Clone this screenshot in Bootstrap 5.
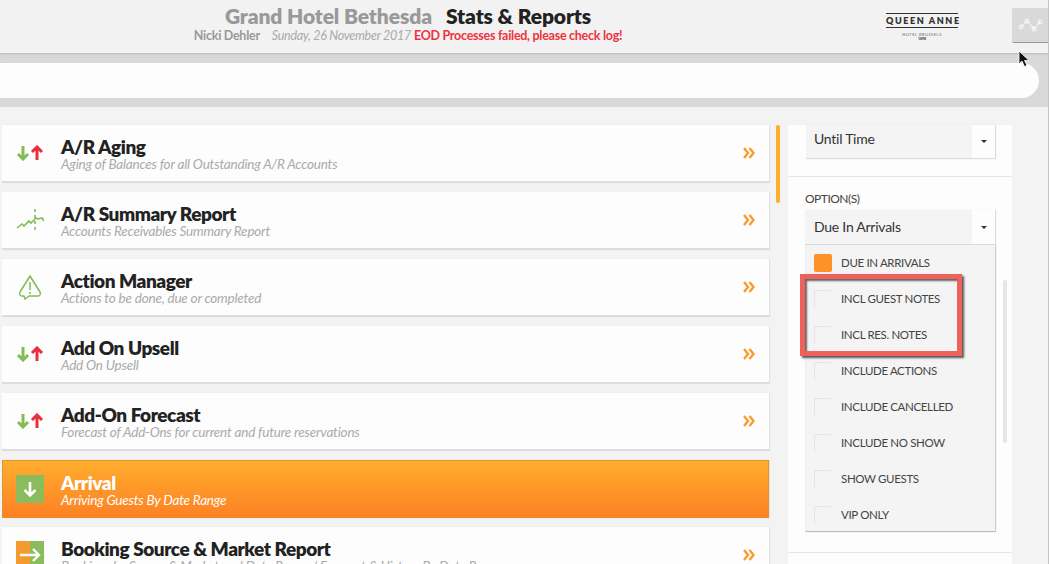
<!DOCTYPE html>
<html lang="en">

<head>
    <meta charset="UTF-8">
    <meta name="viewport" content="width=device-width, initial-scale=1.0">
    <title>Stats &amp; Reports</title>
    <link href="https://cdn.jsdelivr.net/npm/bootstrap@5.3.0/dist/css/bootstrap.min.css" rel="stylesheet">
    <style>
        html, body { height: 564px; overflow: hidden; }
        body { position: relative; font-family: "Lato", "Open Sans", sans-serif; background: #f3f3f3; color: #222; }

        .top-head { height: 53px; background: #f2f2f2; }
        .head-title { width: 816px; padding-top: 4px; }
        .head-main { line-height: 23px; }
        .hotel-name { font-size: 21px; font-weight: 800; color: #999; margin-right: 10px; letter-spacing: -.1px; }
        .page-name { font-size: 21px; font-weight: 800; color: #222; letter-spacing: -.1px; }
        .head-sub { font-size: 12.5px; line-height: 14px; letter-spacing: -.27px; white-space: nowrap; }
        .head-user { font-weight: 700; color: #999; margin-right: 9px; }
        .head-date { font-style: italic; color: #aaa; }
        .head-alert { font-weight: 700; color: #ee3340; }

        .logo-box { width: 196px; padding: 13px 0 0 16px; text-align: center; color: #333; }
        .logo-main { width: 72px; margin: 0 auto; border-top: 1px solid #333; border-bottom: 1px solid #333; font-size: 9px; font-weight: 800; letter-spacing: 1.6px; line-height: 13px; white-space: nowrap; }
        .logo-sub { font-size: 4px; line-height: 5px; letter-spacing: .5px; margin-top: 4px; color: #666; }
        .logo-year { font-size: 3.5px; line-height: 5px; font-weight: 700; }
        .graph-btn { width: 37px; height: 35px; margin-top: 8px; background: #d9d9d9; border-bottom: 1px solid #999; border-radius: 2px 0 0 2px; }

        .search-strip { height: 54px; padding: 10px 10px 9px 0; background: #d9d9d9; box-shadow: inset 0 2px 2px -1px #bbb; }
        .search-fill { height: 35px; background: #fdfdfd; border-radius: 0 18px 18px 0; }

        .main-area { padding-top: 18px; }
        .report-col { width: 767px; margin-left: 2px; }
        .report-item { height: 58px; margin-bottom: 9px; background: #fdfdfd; border: 0; border-radius: 0; border-bottom: 2px solid #ddd; box-shadow: 1px 0 1px #e2e2e2; }
        .report-icon { width: 55px; margin-right: 4px; flex: none; }
        .report-text { padding-top: 2px; }
        .report-name { font-size: 19px; font-weight: 800; line-height: 20px; letter-spacing: -.45px; color: #222; white-space: nowrap; }
        .report-desc { font-size: 13.5px; font-style: italic; line-height: 14px; letter-spacing: -.2px; color: #aaa; white-space: nowrap; }
        .report-chev { margin-right: 14px; }
        .report-item.is-active { background: linear-gradient(#ffae2e, #fd8024); border: 1px solid #e0952a; }
        .is-active .report-name, .is-active .report-desc { color: #fff; }
        .is-active .report-icon { margin-left: -1px; }

        .scroll-thumb { width: 4px; height: 78px; margin: 0 8px 0 7px; background: #ffae2e; border-radius: 2px; }

        .side-panel { width: 224px; height: 460px; background: #fdfdfd; flex: none; }
        .side-top { height: 52px; padding: 0 17px 0 18px; border-bottom: 1px solid #e6e6e6; }
        .pick-box { height: 34px; background: #f4f4f4; border-bottom: 1px solid #ddd; box-shadow: 1px 0 1px #ddd; font-size: 14px; letter-spacing: -.25px; color: #333; }
        .pick-box.is-open { height: 35px; }
        .pick-label { padding-left: 8px; line-height: 28px; }
        .is-open .pick-label { line-height: 34px; padding-left: 9px; }
        .pick-caret { width: 23px; height: 33px; background: #fdfdfd; }
        .is-open .pick-caret { height: 34px; }
        .pick-caret::after { content: ""; border-top: 3px solid #333; border-left: 3px solid transparent; border-right: 3px solid transparent; }
        .side-label { font-size: 12px; line-height: 16px; letter-spacing: -.5px; color: #444; margin: 14px 0 3px; }
        .side-opts { padding: 0 17px 0 17px; }
        .opt-list { height: 287px; background: #f4f4f4; border-bottom: 1px solid #bbb; box-shadow: 1px 0 1px #ccc; border-left: 1px solid #eee; }
        .opt-row { height: 36px; padding-left: 8px; }
        .opt-row .form-check-input { width: 18px; height: 18px; margin: 0; background-color: #f4f4f4; border: 0; border-top: 1px solid #e4e4e4; border-left: 1px solid #e4e4e4; border-radius: 2px; flex: none; }
        .opt-row .form-check-input:checked { background-color: #fd9326; background-image: none; border: 0; }
        .opt-text { margin-left: 9px; font-size: 11.5px; letter-spacing: -.35px; color: #444; white-space: nowrap; }
        .opt-scroll { position: absolute; top: 280px; left: 1003px; width: 4px; height: 163px; background: #e6e6e6; border-radius: 2px; }
        .side-rest { margin-top: 20px; border-top: 1px solid #e6e6e6; }

        .note-frame { position: absolute; left: 800px; top: 274px; width: 162px; height: 82px; border: 5px solid #ee6259; box-shadow: 2px 2px 2px #555, inset 2px 2px 2px #666; }
        .pointer { position: absolute; left: 1018px; top: 50px; }
        .page-edge { position: absolute; top: 0; right: 0; width: 1px; height: 564px; background: #c4c4c4; }
    </style>
</head>

<body>
    <!-- Cabecera -->
    <header class="top-head d-flex">
        <div class="head-title text-center">
            <div class="head-main"><span class="hotel-name">Grand Hotel Bethesda</span> <span class="page-name">Stats &amp; Reports</span></div>
            <div class="head-sub"><span class="head-user">Nicki Dehler</span> <span class="head-date">Sunday, 26 November 2017</span> <span class="head-alert">EOD Processes failed, please check log!</span></div>
        </div>
        <div class="logo-box">
            <div class="logo-main">QUEEN ANNE</div>
            <div class="logo-sub">HOTEL BRUSSELS</div>
            <div class="logo-year">1898</div>
        </div>
        <div class="graph-btn d-flex align-items-center justify-content-center">
            <svg width="25" height="14" viewBox="0 0 25 14" fill="none" stroke="#fff" stroke-width="1"><path d="M3 9 9 3l7 8 6-7"/><circle cx="3" cy="9" r="2"/><circle cx="9" cy="3" r="2"/><circle cx="16" cy="11" r="2"/><circle cx="22" cy="4" r="2"/></svg>
        </div>
    </header>

    <div class="search-strip">
        <div class="search-fill"></div>
    </div>

    <div class="main-area d-flex">
        <!-- Lista de reportes -->
        <div class="report-col">
            <div class="card report-item flex-row align-items-center">
                <div class="report-icon d-flex justify-content-center">
                    <svg width="28" height="16" viewBox="0 0 28 16" fill="none" stroke-width="3"><path d="M7 1v13M2 9l5 5 5-5" stroke="#85bb55"/><path d="M21 15V2M16 7l5-5 5 5" stroke="#ea2e3c"/></svg>
                </div>
                <div class="report-text flex-grow-1"><div class="report-name">A/R Aging</div><div class="report-desc">Aging of Balances for all Outstanding A/R Accounts</div></div>
                <svg class="report-chev" width="12" height="12" viewBox="0 0 12 12" fill="none" stroke="#fd9a2e" stroke-width="2.4"><path d="M1 1l4 5-4 5M6.500 1l4 5-4 5"/></svg>
            </div>
            <div class="card report-item flex-row align-items-center">
                <div class="report-icon d-flex justify-content-center">
                    <svg width="28" height="24" viewBox="0 0 28 24" fill="none" stroke="#85bb55" stroke-width="1.6"><path d="M1 20l5-4 2 2 5-5 2 2 5-5 2 1 4-1 2 3"/><path d="M19 1v21" stroke-dasharray="3 3"/></svg>
                </div>
                <div class="report-text flex-grow-1"><div class="report-name">A/R Summary Report</div><div class="report-desc">Accounts Receivables Summary Report</div></div>
                <svg class="report-chev" width="12" height="12" viewBox="0 0 12 12" fill="none" stroke="#fd9a2e" stroke-width="2.4"><path d="M1 1l4 5-4 5M6.500 1l4 5-4 5"/></svg>
            </div>
            <div class="card report-item flex-row align-items-center">
                <div class="report-icon d-flex justify-content-center">
                    <svg width="24" height="26" viewBox="0 0 24 26" fill="none" stroke="#85bb55" stroke-width="1.5"><path d="M12 2 2 18c-1 2 0 4 2 4h2l1 3 4-3h9c2 0 3-2 2-4z" stroke-linejoin="round"/><path d="M12 8v8M12 18v2"/></svg>
                </div>
                <div class="report-text flex-grow-1"><div class="report-name">Action Manager</div><div class="report-desc">Actions to be done, due or completed</div></div>
                <svg class="report-chev" width="12" height="12" viewBox="0 0 12 12" fill="none" stroke="#fd9a2e" stroke-width="2.4"><path d="M1 1l4 5-4 5M6.500 1l4 5-4 5"/></svg>
            </div>
            <div class="card report-item flex-row align-items-center">
                <div class="report-icon d-flex justify-content-center">
                    <svg width="28" height="16" viewBox="0 0 28 16" fill="none" stroke-width="3"><path d="M7 1v13M2 9l5 5 5-5" stroke="#85bb55"/><path d="M21 15V2M16 7l5-5 5 5" stroke="#ea2e3c"/></svg>
                </div>
                <div class="report-text flex-grow-1"><div class="report-name">Add On Upsell</div><div class="report-desc">Add On Upsell</div></div>
                <svg class="report-chev" width="12" height="12" viewBox="0 0 12 12" fill="none" stroke="#fd9a2e" stroke-width="2.4"><path d="M1 1l4 5-4 5M6.500 1l4 5-4 5"/></svg>
            </div>
            <div class="card report-item flex-row align-items-center">
                <div class="report-icon d-flex justify-content-center">
                    <svg width="28" height="16" viewBox="0 0 28 16" fill="none" stroke-width="3"><path d="M7 1v13M2 9l5 5 5-5" stroke="#85bb55"/><path d="M21 15V2M16 7l5-5 5 5" stroke="#ea2e3c"/></svg>
                </div>
                <div class="report-text flex-grow-1"><div class="report-name">Add-On Forecast</div><div class="report-desc">Forecast of Add-Ons for current and future reservations</div></div>
                <svg class="report-chev" width="12" height="12" viewBox="0 0 12 12" fill="none" stroke="#fd9a2e" stroke-width="2.4"><path d="M1 1l4 5-4 5M6.500 1l4 5-4 5"/></svg>
            </div>
            <div class="card report-item is-active flex-row align-items-center">
                <div class="report-icon d-flex justify-content-center">
                    <svg width="28" height="28" viewBox="0 0 28 28"><rect width="28" height="28" rx="1" fill="#8abb5c"/><path d="M14 7v13M8.500 15l5.500 5.500 5.500-5.500" fill="none" stroke="#fff" stroke-width="2.600"/></svg>
                </div>
                <div class="report-text flex-grow-1"><div class="report-name">Arrival</div><div class="report-desc">Arriving Guests By Date Range</div></div>
            </div>
            <div class="card report-item flex-row align-items-center">
                <div class="report-icon d-flex justify-content-center">
                    <svg width="28" height="28" viewBox="0 0 28 28"><rect width="14" height="28" fill="#f59a2f"/><rect x="14" width="14" height="28" fill="#8abb5c"/><path d="M4 14h19M17 8l6 6-6 6" fill="none" stroke="#fff" stroke-width="2.400"/></svg>
                </div>
                <div class="report-text flex-grow-1"><div class="report-name">Booking Source &amp; Market Report</div><div class="report-desc">Bookings by Source &amp; Market and Date Range / Forecast &amp; History By Date Range</div></div>
                <svg class="report-chev" width="12" height="12" viewBox="0 0 12 12" fill="none" stroke="#fd9a2e" stroke-width="2.4"><path d="M1 1l4 5-4 5M6.500 1l4 5-4 5"/></svg>
            </div>
        </div>

        <div class="scroll-thumb"></div>

        <!-- Panel de opciones -->
        <aside class="side-panel">
            <div class="side-top">
                <div class="pick-box d-flex justify-content-between">
                    <span class="pick-label">Until Time</span>
                    <span class="pick-caret d-flex align-items-center justify-content-center"></span>
                </div>
            </div>
            <div class="side-opts">
                <div class="side-label">OPTION(S)</div>
                <div class="pick-box is-open d-flex justify-content-between">
                    <span class="pick-label">Due In Arrivals</span>
                    <span class="pick-caret d-flex align-items-center justify-content-center"></span>
                </div>
                <div class="opt-list">
                    <label class="opt-row d-flex align-items-center"><input class="form-check-input" type="checkbox" checked><span class="opt-text">DUE IN ARRIVALS</span></label>
                    <label class="opt-row d-flex align-items-center"><input class="form-check-input" type="checkbox"><span class="opt-text">INCL GUEST NOTES</span></label>
                    <label class="opt-row d-flex align-items-center"><input class="form-check-input" type="checkbox"><span class="opt-text">INCL RES. NOTES</span></label>
                    <label class="opt-row d-flex align-items-center"><input class="form-check-input" type="checkbox"><span class="opt-text">INCLUDE ACTIONS</span></label>
                    <label class="opt-row d-flex align-items-center"><input class="form-check-input" type="checkbox"><span class="opt-text">INCLUDE CANCELLED</span></label>
                    <label class="opt-row d-flex align-items-center"><input class="form-check-input" type="checkbox"><span class="opt-text">INCLUDE NO SHOW</span></label>
                    <label class="opt-row d-flex align-items-center"><input class="form-check-input" type="checkbox"><span class="opt-text">SHOW GUESTS</span></label>
                    <label class="opt-row d-flex align-items-center"><input class="form-check-input" type="checkbox"><span class="opt-text">VIP ONLY</span></label>
                </div>
            </div>
            <div class="side-rest"></div>
        </aside>
    </div>

    <div class="opt-scroll"></div>
    <div class="note-frame"></div>
    <svg class="pointer" width="13" height="18" viewBox="0 0 13 18"><path d="M1 1v13l3-3 2.500 5.500 2.500-1L6.500 10.500H11z" fill="#111" stroke="#fff" stroke-width=".8"/></svg>
    <div class="page-edge"></div>

    <script src="https://cdn.jsdelivr.net/npm/bootstrap@5.3.0/dist/js/bootstrap.bundle.min.js"></script>
</body>
</html>
